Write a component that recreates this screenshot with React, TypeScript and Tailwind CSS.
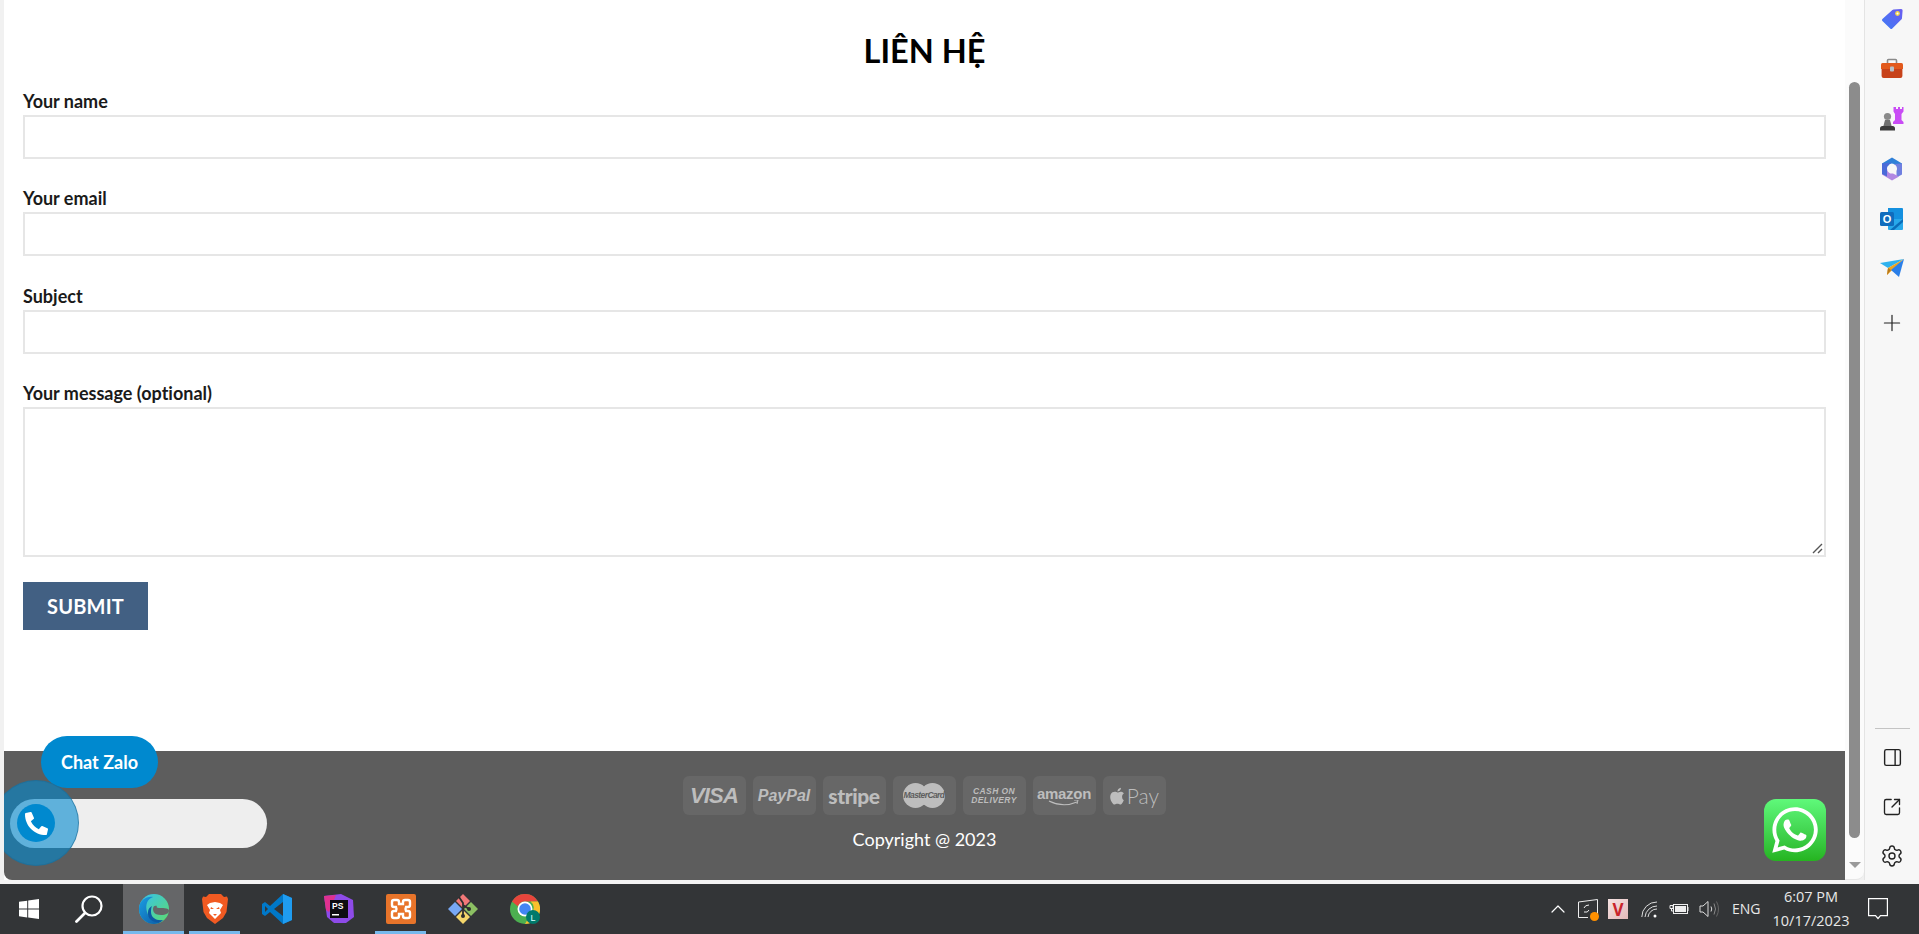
import React from "react";
import { FaWhatsapp, FaPhoneAlt } from "react-icons/fa";
import { Plus, PanelRight, SquareArrowOutUpRight, Settings, ChevronUp } from "lucide-react";

const fields = ["Your name", "Your email", "Subject"];

function Tag() {
  return (
    <svg width="24" height="24" viewBox="0 0 24 24">
      <defs><linearGradient id="tg" x1="0" y1="1" x2="1" y2="0"><stop offset="0" stopColor="#3f7cf5" /><stop offset="1" stopColor="#6b5cf0" /></linearGradient></defs>
      <path d="M13.5 2.5 21 2a1.5 1.5 0 0 1 1.6 1.6L22 11q0 1-.7 1.6l-9 9a1.5 1.5 0 0 1-2.1 0L2.4 14a1.5 1.5 0 0 1 0-2.1l10-9q.5-.4 1.1-.4Z" fill="url(#tg)" />
      <circle cx="17.5" cy="6.5" r="2.4" fill="#f6d84a" />
      <circle cx="17.5" cy="6.5" r="1" fill="#fff" />
    </svg>
  );
}
function Toolbox() {
  return (
    <svg width="24" height="24" viewBox="0 0 24 24">
      <path d="M7.5 7V3.5q0-1 1-1h7q1 0 1 1V7" fill="none" stroke="#8a8a8a" strokeWidth="1.6" />
      <path d="M1 7.5q0-1.5 1.5-1.5h19Q23 6 23 7.5V12H1Z" fill="#e2591c" />
      <path d="M1.6 12h20.8v7q0 2-2 2H3.6q-2 0-2-2Z" fill="#c7421a" />
      <rect x="10" y="9.5" width="4" height="5" rx="1" fill="#b9c0c6" />
    </svg>
  );
}
function Chess() {
  return (
    <svg width="24" height="24" viewBox="0 0 24 24">
      <path d="M14 0h2v2h2V0h2v2h2V0h1.500v4.500L21.500 7v6l2 2v2H13v-2l2-2V7l-1.500-2.500V0Z" fill="#c94cf5" />
      <circle cx="7.500" cy="9.500" r="3.600" fill="#8a8a8a" />
      <path d="M5 13h5l1.600 6H3.400Z" fill="#707070" />
      <path d="M0 21.500q0-2.500 2.500-2.500h10q2.500 0 2.500 2.500V23.500H0Z" fill="#3b3b3b" />
    </svg>
  );
}
function M365() {
  return (
    <svg width="24" height="24" viewBox="0 0 24 24">
      <path d="M12 0.500 2 6.500v5l6-2.500a5 5 0 0 1 6-2l8 3V6.500Z" fill="#2f80d8" />
      <path d="M22 6.500v11l-5.500 3V14a5 5 0 0 0-3-7Z" fill="#6f7fe0" />
      <path d="M2 11.500v6l10 6 7-4-6-3a5 5 0 0 1-6-5Z" fill="#b187e2" />
      <path d="M2 6.500V17l5 2.500V11a5 5 0 0 1 2-3.500l3-2Z" fill="#4a6ad8" />
      <circle cx="12" cy="12" r="3.800" fill="#f7f7f7" />
    </svg>
  );
}
function Outlook() {
  return (
    <svg width="24" height="24" viewBox="0 0 24 24">
      <path d="M8 1h14q1 0 1 1v10H8Z" fill="#1490df" />
      <path d="M8 12h15v10q0 1-1 1H9q-1 0-1-1Z" fill="#28a8ea" />
      <path d="M10 23 23 12v3l-9 8Z" fill="#0a6cb8" />
      <rect x="0" y="5" width="14" height="14" rx="1.5" fill="#0f6cbd" />
      <text x="7" y="16" textAnchor="middle" fontSize="11" fontWeight="700" fill="#fff" fontFamily="Liberation Sans, sans-serif">O</text>
    </svg>
  );
}
function Send() {
  return (
    <svg width="24" height="24" viewBox="0 0 24 24">
      <path d="M0 6 24 2 8 11Z" fill="#2fb2ee" />
      <path d="M24 2 8 11l-1 7Z" fill="#f0a51e" />
      <path d="M24 2 11 13l8 7Z" fill="#2b7fe8" />
      <path d="M8 11 7 18l4-5Z" fill="#b8791a" />
    </svg>
  );
}

function Edge() {
  return (
    <svg width="30" height="30" viewBox="0 0 30 30">
      <defs>
        <linearGradient id="e1" x1="0" y1="0" x2="1" y2="1"><stop offset="0" stopColor="#35c1f1" /><stop offset="1" stopColor="#5fdc6a" /></linearGradient>
        <linearGradient id="e2" x1="0" y1="0" x2="1" y2="1"><stop offset="0" stopColor="#1b9de2" /><stop offset="1" stopColor="#0c59a4" /></linearGradient>
      </defs>
      <circle cx="15" cy="15" r="15" fill="url(#e1)" />
      <path d="M0 15C0 6 8 2 14 3c-6 2-8 8-6 15 2 7 9 11 16 8-3 3-6 4-9 4C6 30 0 23 0 15Z" fill="url(#e2)" />
      <path d="M30 17c0 2-3 4-8 4-6 0-8-3-8-6s2-4 4-3c-1 1 0 2 2 2 6 0 10 0 10 3Z" fill="#656668" />
      <path d="M12 18c0 6 6 9 12 8-6 5-16 1-15-8 0-3 2-5 4-6-1 2-1 4-1 6Z" fill="#0c59a4" />
    </svg>
  );
}
function Brave() {
  return (
    <svg width="26" height="30" viewBox="0 0 26 30">
      <path d="M7 0h12l3 3 3-.5L26 5l-1.500 13L21 24l-8 6-8-6-3.500-6L0 5l1-2.500L4 3Z" fill="#f15a22" />
      <path d="M8 9l5-1 5 1 3 2-3 5 1 3-3 3-3 3-3-3-3-3 1-3-3-5Z" fill="#fff" />
      <path d="M9 13l3 2H8.500ZM17 13l-3 2h3.500Z" fill="#f15a22" />
      <path d="M11 20h4l-2 2Z" fill="#f15a22" />
    </svg>
  );
}
function VSCode() {
  return (
    <svg width="30" height="30" viewBox="0 0 30 30">
      <path d="M21 0 30 4v22l-9 4L8 18l-5 4-3-2V10l3-2 5 4Z" fill="#0078c8" />
      <path d="M21 0 30 4v22l-9 4Z" fill="#1f9cf0" />
      <path d="M21 8v14l-9-7Z" fill="#333638" />
      <path d="M3 12l3 3-3 3Z" fill="#333638" />
    </svg>
  );
}
function PhpStorm() {
  return (
    <svg width="30" height="30" viewBox="0 0 30 30">
      <path d="M0 2 17 0l12 6 1 17-8 6H10l-7-6Z" fill="#8e4be8" />
      <path d="M0 2 12 1 5 18 2 16Z" fill="#e0318f" />
      <rect x="6" y="6" width="18" height="18" fill="#0d0d12" />
      <text x="8" y="15" fontSize="8.500" fontWeight="700" fill="#fff" fontFamily="Liberation Sans, sans-serif">PS</text>
      <rect x="8" y="20" width="7" height="1.500" fill="#fff" />
    </svg>
  );
}
function Xampp() {
  return (
    <svg width="30" height="30" viewBox="0 0 30 30">
      <rect width="30" height="30" rx="2" fill="#e8742a" />
      <path d="M6 8q0-2 2-2h3q2 0 2 2v2h4V8q0-2 2-2h3q2 0 2 2v3q0 2-2 2h-2q-1 2 0 4h2q2 0 2 2v3q0 2-2 2h-3q-2 0-2-2v-2h-4v2q0 2-2 2H8q-2 0-2-2v-3q0-2 2-2h2q1-2 0-4H8q-2 0-2-2Z" fill="none" stroke="#fff" strokeWidth="2.400" />
    </svg>
  );
}
function Git() {
  return (
    <svg width="30" height="30" viewBox="0 0 30 30">
      <path d="M15 0 22 7l-7 7-7-7Z" fill="#f27878" />
      <path d="M7 8l7 7-7 7-7-7Z" fill="#78a8f5" />
      <path d="M23 8l7 7-7 7-7-7Z" fill="#8cc063" />
      <path d="M15 16l7 7-7 7-7-7Z" fill="#f5d66b" />
      <path d="M11 3l4 6v14M15 11l6 4" stroke="#2e2e2e" strokeWidth="1.800" fill="none" />
      <circle cx="15" cy="22" r="2" fill="#2e2e2e" />
      <circle cx="21" cy="15" r="2" fill="#2e2e2e" />
    </svg>
  );
}
function Chrome() {
  return (
    <svg width="30" height="30" viewBox="0 0 30 30">
      <circle cx="15" cy="15" r="15" fill="#4caf50" />
      <path d="M2 7.500A15 15 0 0 1 28 7.500H15a7.500 7.500 0 0 0-7 5Z" fill="#e8453c" />
      <path d="M28 7.500A15 15 0 0 1 15 30l6.500-11a7.500 7.500 0 0 0-1-11.500Z" fill="#fbc02d" />
      <circle cx="15" cy="15" r="7.500" fill="#fff" />
      <circle cx="15" cy="15" r="5.800" fill="#4285f4" />
      <circle cx="23" cy="23" r="7" fill="#00796b" />
      <text x="23" y="26.500" textAnchor="middle" fontSize="9" fill="#dff" fontFamily="Liberation Sans, sans-serif">L</text>
    </svg>
  );
}

function TaskItem({ active, running, children }: { active?: boolean; running?: boolean; children: React.ReactNode }) {
  return (
    <div className={`relative flex h-full shrink-0 items-center justify-center ${active ? "w-[61px] bg-[#656668]" : "w-[62px]"}`}>
      {children}
      {running && <div className={`absolute bottom-0 h-[3px] bg-[#76b9ed] ${active ? "inset-x-0" : "left-[5px] right-[6px]"}`} />}
    </div>
  );
}

function Payment({ children }: { children: React.ReactNode }) {
  return (
    <div className="flex h-[39px] w-[63px] items-center justify-center rounded-[6px] bg-[#676767] text-[#bdbdbd]">{children}</div>
  );
}

export default function App() {
  return (
    <div className="flex h-[934px] w-[1919px] flex-col overflow-hidden bg-[#f0f0f0] font-['Lato',sans-serif]">
      <div className="flex h-[880px] shrink-0">
        <div className="w-[4px] shrink-0 bg-[#f1f1f1]" />
        <main className="relative flex w-[1841px] shrink-0 flex-col overflow-hidden bg-white">
          <form className="flex flex-col pl-[19px] pr-[19px] text-[#1a1a1a] [font-variant-ligatures:none]">
            <h1 className="pb-[17px] pt-[29px] text-center text-[32.500px] font-bold leading-[44px] text-black">LIÊN HỆ</h1>
            {fields.map((f) => (
              <div key={f} className="mb-[28.33px] flex flex-col">
                <label className="h-[25px] text-[18px] font-bold leading-[23px]">{f}</label>
                <div className="h-[44px] border-2 border-[#e6e6e6] bg-white" />
              </div>
            ))}
            <div className="mb-[25px] flex flex-col">
              <label className="h-[25px] text-[18px] font-bold leading-[23px]">Your message (optional)</label>
              <div className="relative h-[150px] border-2 border-[#e6e6e6] bg-white">
                <svg className="absolute bottom-0 right-0" width="12" height="12" viewBox="0 0 12 12">
                  <path d="M1 10 10 1M6 10l4-4" stroke="#555" strokeWidth="1.400" />
                </svg>
              </div>
            </div>
            <button type="button" className="h-[48px] w-[125px] bg-[#426083] text-[20px] font-bold tracking-[0.2px] text-white">SUBMIT</button>
          </form>
          <footer className="mt-auto flex h-[129px] flex-col items-center rounded-bl-[8px] bg-[#5d5d5d] pt-[25px]">
            <div className="mr-[1px] flex gap-[7px]">
              <Payment><span className="font-['Liberation_Sans',sans-serif] text-[22px] font-bold italic tracking-[-0.8px]">VISA</span></Payment>
              <Payment><span className="font-['Liberation_Sans',sans-serif] text-[16px] font-bold italic">PayPal</span></Payment>
              <Payment><span className="text-[21px] font-black leading-none tracking-[-0.4px]">stripe</span></Payment>
              <Payment>
                <div className="relative flex h-[25px] w-[42px] items-center justify-center">
                  <svg className="absolute inset-0" width="42" height="25" viewBox="0 0 42 25">
                    <circle cx="12.500" cy="12.500" r="12.500" fill="#bdbdbd" />
                    <circle cx="29.500" cy="12.500" r="12.500" fill="#bdbdbd" />
                  </svg>
                  <span className="relative font-['Liberation_Sans',sans-serif] text-[8.500px] font-bold italic tracking-[-0.6px] text-[#5d5d5d]">MasterCard</span>
                </div>
              </Payment>
              <Payment>
                <span className="text-center font-['Liberation_Sans',sans-serif] text-[8.500px] font-bold italic leading-[8.500px] tracking-[0.4px]">CASH ON<br />DELIVERY</span>
              </Payment>
              <Payment>
                <div className="relative -mt-[4px] flex flex-col items-center">
                  <span className="font-['Liberation_Sans',sans-serif] text-[15px] font-bold leading-[15px] tracking-[-0.3px]">amazon</span>
                  <svg className="absolute -bottom-[6px]" width="34" height="7" viewBox="0 0 34 7">
                    <path d="M2 1q14 7 28 1" stroke="#bdbdbd" strokeWidth="1.200" fill="none" />
                    <path d="M27 0h4l-1 4" stroke="#bdbdbd" strokeWidth="1" fill="none" />
                  </svg>
                </div>
              </Payment>
              <Payment>
                <div className="flex items-center gap-[2px]">
                  <svg width="16" height="20" viewBox="0 0 24 28">
                    <path d="M19.600 15c0-3.200 2.600-4.700 2.700-4.800-1.500-2.200-3.800-2.500-4.600-2.500-2-.2-3.800 1.200-4.800 1.200s-2.500-1.100-4.200-1.100C6 7.800 4 9 2.900 10.900c-2.200 3.900-.6 9.600 1.600 12.700 1.100 1.500 2.300 3.200 4 3.200 1.600-.1 2.200-1 4.100-1s2.500 1 4.100 1c1.700 0 2.800-1.500 3.800-3.100 1.200-1.800 1.700-3.500 1.800-3.600-.1 0-2.700-1.100-2.700-5.100ZM16.500 5.500c.9-1.100 1.500-2.500 1.300-4-1.300.1-2.800.8-3.700 1.900-.8.9-1.500 2.400-1.300 3.800 1.400.1 2.900-.7 3.700-1.700Z" fill="#bdbdbd" />
                  </svg>
                  <span className="text-[21px] font-light leading-none">Pay</span>
                </div>
              </Payment>
            </div>
            <p className="mt-[12px] text-[18px] leading-[24px] text-white">Copyright @ 2023</p>
          </footer>

          <div className="absolute left-[37px] top-[736px] flex h-[52px] w-[117px] items-center justify-center rounded-full bg-[#0089cf] text-[18px] font-bold text-white">Chat Zalo</div>
          <div className="absolute left-[6px] top-[799px] h-[49px] w-[257px] rounded-full bg-[#eeeeee]" />
          <div className="absolute left-[-11px] top-[780px] flex h-[86px] w-[86px] items-center justify-center rounded-full border border-[#1d6b95]/60 bg-[#0089cf]/60">
            <div className="flex h-[38px] w-[38px] items-center justify-center rounded-full bg-[#0089cf]">
              <FaPhoneAlt className="text-white" size={23} />
            </div>
          </div>
          <div className="absolute left-[1760px] top-[799px] flex h-[62px] w-[62px] items-center justify-center rounded-[12px] bg-gradient-to-b from-[#5ff97a] to-[#25b41f]">
            <FaWhatsapp className="text-white" size={52} />
          </div>
        </main>
        <div className="flex w-[19px] shrink-0 flex-col items-center rounded-br-[8px] border-b border-[#e6e6e6] bg-[#fbfbfb]">
          <div className="mt-[82px] h-[756px] w-[11px] shrink-0 rounded-full bg-[#8c8c8c]" />
          <div className="mt-[24px] h-0 w-0 border-x-[6px] border-t-[6px] border-x-transparent border-t-[#9a9a9a]" />
        </div>
        <aside className="flex w-[55px] shrink-0 flex-col items-center border-l border-[#e4e4e4] bg-[#f7f7f7] pb-[12px] pt-[7px]">
          <div className="flex flex-col gap-[26px]">
            <Tag /><Toolbox /><Chess /><M365 /><Outlook /><Send />
          </div>
          <Plus className="mt-[29px] text-[#222]" size={26} strokeWidth={1.1} />
          <div className="mb-[16px] mt-auto h-px w-[35px] bg-[#c4c4c4]" />
          <div className="flex flex-col items-center text-[#222]">
            <div className="mb-[26px] flex h-[24px] w-[24px] items-center justify-center"><PanelRight size={21} strokeWidth={1.6} /></div>
            <div className="mb-[25px] flex h-[24px] w-[24px] items-center justify-center"><SquareArrowOutUpRight size={20} strokeWidth={1.6} /></div>
            <Settings size={24} strokeWidth={1.4} />
          </div>
        </aside>
      </div>

      <div className="h-[4px] shrink-0 bg-[#f4f4f4]" />

      <div className="flex h-[50px] shrink-0 items-center bg-[#333537] font-['Open_Sans',sans-serif] text-white">
        <div className="flex h-full w-[61px] items-center justify-center pr-[3px]">
          <svg width="20" height="20" viewBox="0 0 20 20"><path d="M0 2.800 8.200 1.700v7.900H0ZM9.200 1.500 20 0v9.600H9.200ZM0 10.500h8.200v7.900L0 17.200ZM9.200 10.500H20V20L9.200 18.500Z" fill="#fff" /></svg>
        </div>
        <div className="flex h-full w-[62px] items-center justify-center pr-[6px]">
          <svg width="28" height="28" viewBox="0 0 28 28"><circle cx="17" cy="11" r="9.500" fill="none" stroke="#fff" strokeWidth="2.200" /><path d="M10 18 1.500 26.500" stroke="#fff" strokeWidth="2.800" strokeLinecap="round" /></svg>
        </div>
        <TaskItem active running><Edge /></TaskItem>
        <TaskItem running><Brave /></TaskItem>
        <TaskItem><VSCode /></TaskItem>
        <TaskItem><PhpStorm /></TaskItem>
        <TaskItem running><Xampp /></TaskItem>
        <TaskItem><Git /></TaskItem>
        <TaskItem><Chrome /></TaskItem>

        <div className="ml-auto flex h-full items-center text-[#e8e8e8]">
          <ChevronUp size={24} strokeWidth={1.2} className="mr-[8px] text-white" />
          <div className="relative mr-[10px] h-[20px] w-[20px]">
            <svg width="20" height="20" viewBox="0 0 20 20"><path d="M.5 3 19.500.5v14l-3 .5M10 18.500H.5V3" fill="none" stroke="#eee" strokeWidth="1" /><path d="M6 9q1-3 5-3M11 11q-1 3-5 2" fill="none" stroke="#eee" strokeWidth="1" /></svg>
            <div className="absolute bottom-[-2px] right-[-1px] h-[9px] w-[9px] rounded-full bg-[#ff9000]" />
          </div>
          <div className="mr-[13px] flex h-[20px] w-[20px] items-center justify-center bg-gradient-to-br from-[#f5e3e3] to-[#e3b9b9] text-[17px] font-bold leading-none text-[#c9242b]">V</div>
          <svg className="mr-[11px]" width="17" height="17" viewBox="0 0 17 17" fill="none" stroke="#ddd" strokeWidth="1"><path d="M.8 16A15 15 0 0 1 16 1M4 16A12 12 0 0 1 16 5M7 16A9 9 0 0 1 16 8" /><circle cx="14" cy="15" r="1.500" fill="#fff" stroke="none" /></svg>
          <svg className="mr-[10px]" width="20" height="14" viewBox="0 0 20 14" fill="none" stroke="#eee" strokeWidth="1"><rect x="4.500" y="2.500" width="14" height="9" /><rect x="6" y="4" width="11" height="6" fill="#eee" stroke="none" /><path d="M19 5v4" /><path d="M1 3.500h3v3H1ZM2.500 6.500V9h2" /></svg>
          <svg className="mr-[13px]" width="20" height="18" viewBox="0 0 20 18" fill="none" stroke="#ddd" strokeWidth="1"><path d="M1 6h3l5-4.500v15L4 12H1Z" /><path d="M12 6.500q1.500 2.500 0 5" /><path d="M15 3.500q3 5.500 0 11" stroke="#888" /><path d="M17.500 1.500q4 7.500 0 15" stroke="#666" /></svg>
          <span className="mr-[12px] w-[29px] whitespace-nowrap text-[14px] leading-none">ENG</span>
          <div className="mr-[19px] flex w-[76px] flex-col items-center text-[14.500px] leading-[24px]">
            <span className="whitespace-nowrap">6:07 PM</span>
            <span className="whitespace-nowrap">10/17/2023</span>
          </div>
          <svg className="mr-[31px]" width="20" height="22" viewBox="0 0 20 22" fill="none" stroke="#fff" strokeWidth="1.200"><path d="M.6.6h18.800v17H12.500L10 20.500 7.500 17.600H.6Z" /></svg>
        </div>
      </div>
    </div>
  );
}
